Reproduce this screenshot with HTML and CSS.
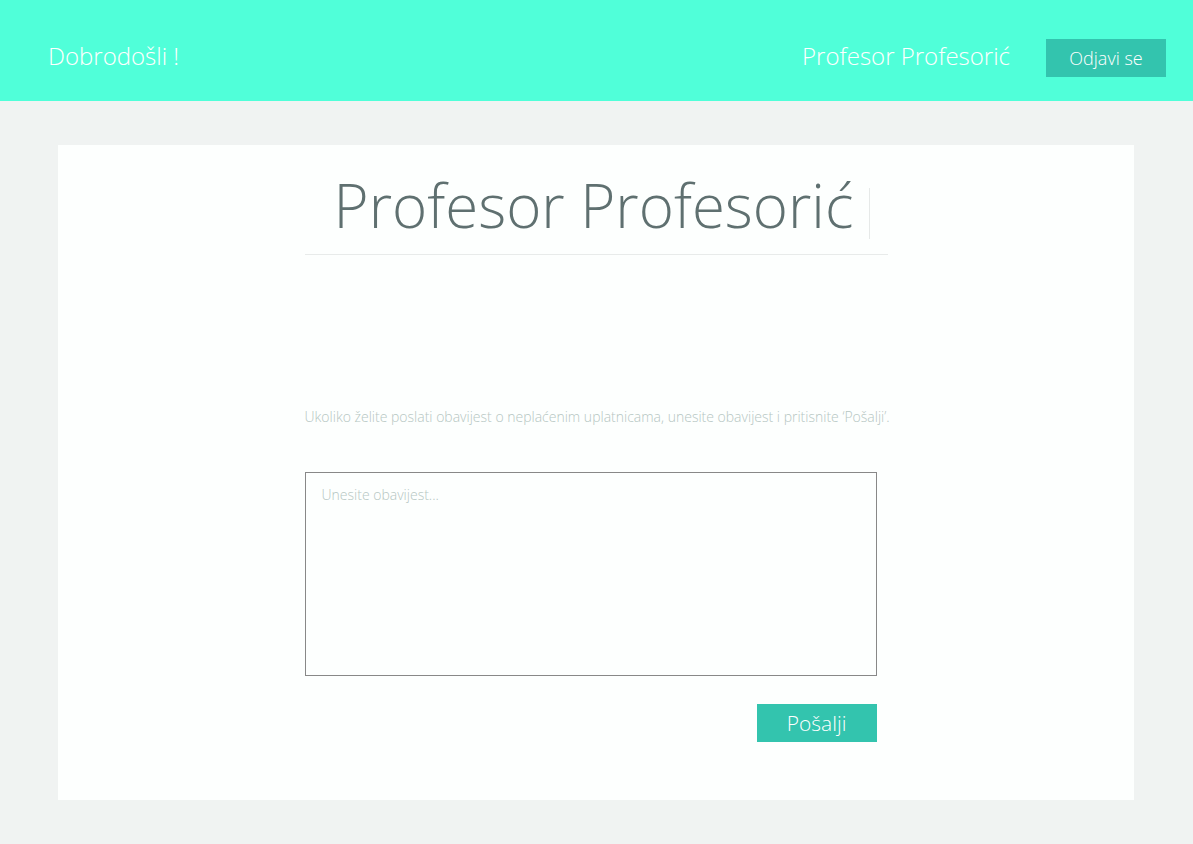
FILE: index.html
```html
<!DOCTYPE html>
<html lang="hr">
<head>
<meta charset="utf-8">
<title>Profesor</title>
<link rel="stylesheet" href="styles.css">
</head>
<body>
<header class="topbar">
  <div class="welcome">Dobrodošli !</div>
  <div class="user">
    <span class="user-name">Profesor Profesorić</span>
    <button class="btn btn-logout">Odjavi se</button>
  </div>
</header>
<main class="page">
  <section class="card">
    <div class="column">
      <div class="title-wrap">
        <h1 class="title">Profesor Profesorić</h1>
      </div>
      <p class="hint">Ukoliko želite poslati obavijest o neplaćenim uplatnicama, unesite obavijest i pritisnite ‘Pošalji’.</p>
      <textarea class="notice" placeholder="Unesite obavijest..."></textarea>
      <div class="actions">
        <button class="btn btn-send">Pošalji</button>
      </div>
    </div>
  </section>
</main>
</body>
</html>
```

FILE: styles.css
```css
* { box-sizing: border-box; }
html, body { margin: 0; padding: 0; }
body {
  background: #f0f3f2;
  font-family: "Open Sans", "Liberation Sans", sans-serif;
  font-weight: 300;
  width: 1193px;
  height: 844px;
  overflow: hidden;
}
.topbar {
  height: 101px;
  background: #50ffd9;
  display: flex;
  align-items: center;
  justify-content: space-between;
  padding: 14px 27px 0 48px;
  color: #ffffff;
}
.welcome {
  font-size: 24px;
  font-weight: 300;
  margin-bottom: 4px;
}
.user {
  display: flex;
  align-items: center;
  gap: 36px;
}
.user-name {
  font-size: 24px;
  font-weight: 300;
  margin-bottom: 4px;
}
.btn {
  border: none;
  background: #33c4ae;
  color: #ffffff;
  font-family: "Open Sans", "Liberation Sans", sans-serif;
  font-weight: 300;
  cursor: pointer;
  width: 120px;
  height: 38px;
  padding: 0;
}
.btn-logout { font-size: 18px; }
.btn-send { font-size: 21px; }
.page {
  padding: 44px 59px 44px 58px;
}
.card {
  background: #fdfffe;
  height: 655px;
  display: flex;
  justify-content: center;
}
.column {
  width: 583px;
  display: flex;
  flex-direction: column;
}
.title-wrap {
  border-bottom: 1px solid #e8ebea;
  display: flex;
  justify-content: center;
  align-items: flex-start;
  padding: 25px 0 14px 12px;
}
.title {
  margin: 0;
  font-size: 60px;
  font-weight: 300;
  color: #5f7070;
  line-height: 70px;
  display: flex;
  align-items: flex-start;
  gap: 16px;
}
.title::after {
  content: "";
  width: 1px;
  height: 51px;
  margin-top: 18px;
  background: #e6e9e8;
}
.hint {
  margin: 152px 0 0 0;
  font-size: 14px;
  color: #b5c6c2;
  white-space: nowrap;
}
.notice {
  margin-top: 46px;
  width: 572px;
  height: 204px;
  border: 1px solid #888888;
  background: #fdfffe;
  resize: none;
  padding: 12px 16px;
  font-family: "Open Sans", "Liberation Sans", sans-serif;
  font-weight: 300;
  font-size: 14px;
  color: #5f7070;
  outline: none;
}
.notice::placeholder { color: #b5c6c2; }
.actions {
  width: 572px;
  display: flex;
  justify-content: flex-end;
  margin-top: 28px;
}
```
